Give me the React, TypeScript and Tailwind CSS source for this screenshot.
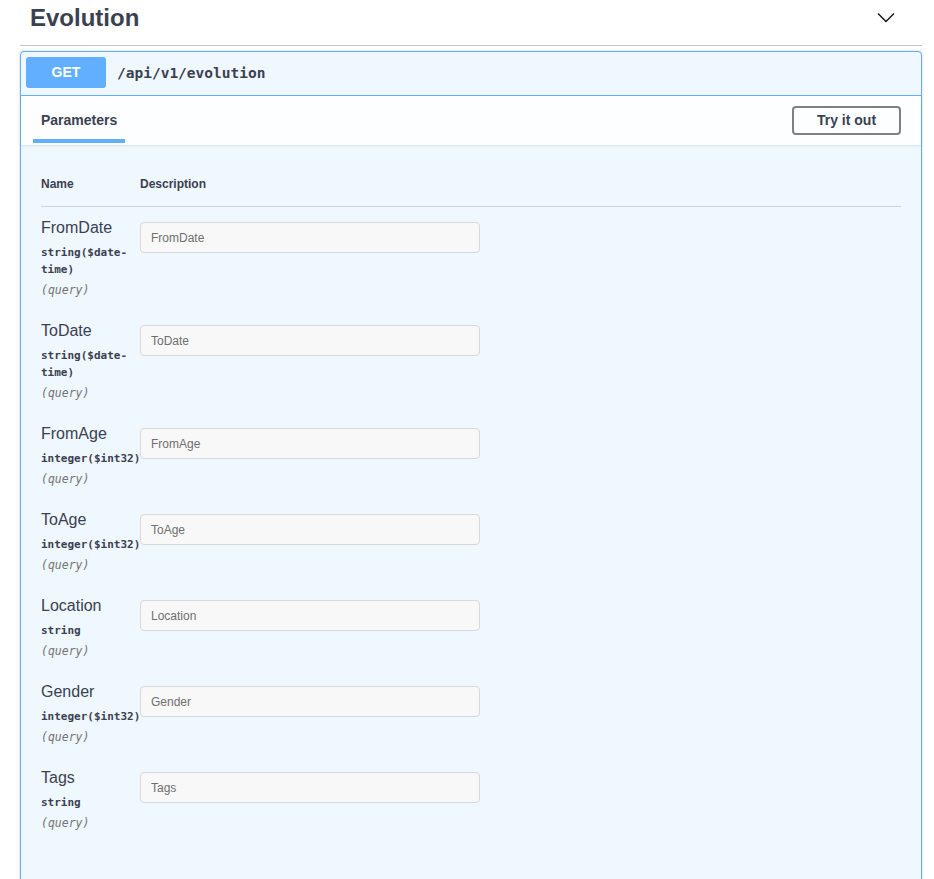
import React from 'react';

type Param = { name: string; type: string };

const PARAMS: Param[] = [
  { name: 'FromDate', type: 'string($date-time)' },
  { name: 'ToDate', type: 'string($date-time)' },
  { name: 'FromAge', type: 'integer($int32)' },
  { name: 'ToAge', type: 'integer($int32)' },
  { name: 'Location', type: 'string' },
  { name: 'Gender', type: 'integer($int32)' },
  { name: 'Tags', type: 'string' },
];

const sans = "font-['Liberation_Sans',Arial,sans-serif]";
const mono = "font-['DejaVu_Sans_Mono',monospace]";

function Chevron() {
  return (
    <svg width="18" height="11" viewBox="0 0 18 11" fill="none">
      <path d="M1 1.5 L9 9.5 L17 1.5" stroke="#111" strokeWidth="1.4" />
    </svg>
  );
}

function ParamRow({ p }: { p: Param }) {
  return (
    <div className="flex pt-[11px] pb-[11px]">
      <div className="w-[99px] shrink-0">
        <div className="text-[16px] leading-[20px] text-[#3b4151]">{p.name}</div>
        <div className={`${mono} pt-[6px] pb-[4px] text-[11px] font-bold leading-[17px] text-[#3b4151] whitespace-nowrap`}>
          {p.type.includes('-') ? (
            <>
              {p.type.split('-')[0]}-<br />
              {p.type.split('-')[1]}
            </>
          ) : (
            p.type
          )}
        </div>
        <div className={`${mono} text-[11.5px] italic leading-[17px] text-[#757575]`}>(query)</div>
      </div>
      <div className="pt-[4px]">
        <input
          disabled
          placeholder={p.name}
          className="w-[340px] h-[31px] rounded-[4px] border border-[#d9d9d9] bg-[#f8f8f8] px-[10px] text-[12px] text-[#3b4151] placeholder:text-[#6f6f6f]"
        />
      </div>
    </div>
  );
}

export default function App() {
  return (
    <div className={`${sans} min-h-screen bg-white text-[#3b4151] pl-[20px] pr-[12px]`}>
      {/* Tag header */}
      <div className="flex items-start justify-between h-[46px] border-b border-[#c4c6cb] pl-[10px] pr-[27px] pt-[4px]">
        <h3 className="text-[24px] font-bold leading-[28px]">Evolution</h3>
        <div className="pt-[8px]"><Chevron /></div>
      </div>

      {/* Operation block */}
      <div className="mt-[5px] rounded-[4px] border border-[#61affe] bg-[#eff7ff] shadow-[0_0_3px_rgba(0,0,0,0.19)]">
        <div className="flex items-center gap-[11px] border-b border-[#61affe] pl-[5px] pt-[5px] pb-[7px]">
          <span className="w-[80px] h-[31px] flex items-center justify-center rounded-[3px] bg-[#61affe] text-[14px] font-bold text-white">
            GET
          </span>
          <span className={`${mono} pt-[2px] text-[14.5px] font-bold text-[#3b4151]`}>/api/v1/evolution</span>
        </div>

        <div className="flex items-center justify-between h-[49px] bg-[#fcfeff] pl-[12px] pr-[20px] shadow-[0_1px_2px_rgba(0,0,0,0.1)]">
          <div className="relative h-full flex items-center px-[8px]">
            <h4 className="text-[14px] font-bold">Parameters</h4>
            <div className="absolute left-0 right-0 bottom-[2px] h-[4px] bg-[#61affe]" />
          </div>
          <button className="h-[29px] w-[109px] rounded-[4px] border-2 border-[#808080] text-[14px] font-bold text-[#3b4151]">
            Try it out
          </button>
        </div>

        <div className="p-[20px] pb-[60px]">
          <div className="flex border-b border-[#cdd3dc] pt-[12px] pb-[15px] text-[12px] font-bold leading-[14px]">
            <div className="w-[99px]">Name</div>
            <div>Description</div>
          </div>
          {PARAMS.map(p => (
            <ParamRow key={p.name} p={p} />
          ))}
        </div>
      </div>
    </div>
  );
}
